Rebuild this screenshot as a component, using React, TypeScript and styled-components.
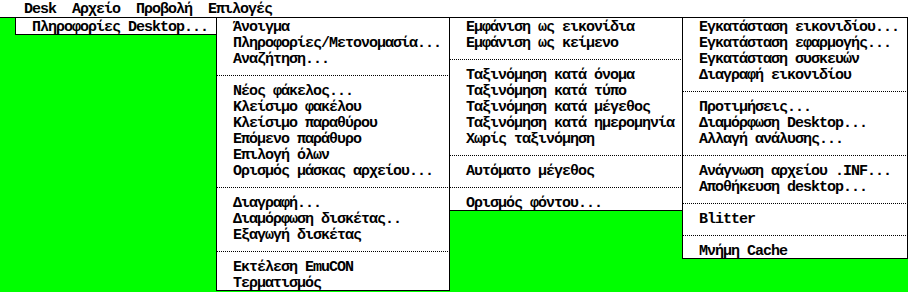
import React from 'react';
import styled, { createGlobalStyle } from 'styled-components';

const Global = createGlobalStyle`
  html, body { margin: 0; padding: 0; background: #00ff00; }
  body { width: 908px; height: 292px; overflow: hidden; }
`;

const Screen = styled.div`
  width: 908px;
  height: 292px;
  overflow: hidden;
  background: #00ff00;
  color: #000;
  font-family: "Liberation Mono", "DejaVu Sans Mono", monospace;
  font-weight: bold;
  font-size: 15px;
  letter-spacing: -1px;
  line-height: 16px;
  white-space: pre;
`;

const MenuBar = styled.div`
  display: flex;
  box-sizing: border-box;
  height: 18px;
  background: #fff;
  border-bottom: 1px solid #000;
  padding-left: 16px;
`;

const Title = styled.div`
  box-sizing: border-box;
  height: 17px;
  padding: 2px 8px 0;
  line-height: 16px;
`;

const Drops = styled.div`
  display: flex;
  align-items: flex-start;
  margin-top: -1px;
  padding-left: 15px;
`;

const Panel = styled.div<{ $cols: number }>`
  width: ${(p) => p.$cols * 8}px;
  background: #fff;
  border: 1px solid #000;
  & + & {
    margin-left: -1px;
  }
`;

const Item = styled.div`
  box-sizing: border-box;
  height: 16px;
  padding: 2px 0 0 16px;
  line-height: 16px;
`;

const Sep = styled.div`
  height: 16px;
  position: relative;
  &::after {
    content: '';
    position: absolute;
    left: 0;
    right: 0;
    top: 9px;
    height: 1px;
    background-image: linear-gradient(to right, #000 50%, transparent 50%);
    background-size: 2px 1px;
  }
`;

type Entry = string | null;

const menus: { cols: number; items: Entry[] }[] = [
  { cols: 25, items: ['Πληροφορίες Desktop...'] },
  {
    cols: 29,
    items: [
      'Άνοιγμα',
      'Πληροφορίες/Μετονομασία...',
      'Αναζήτηση...',
      null,
      'Νέος φάκελος...',
      'Κλείσιμο φακέλου',
      'Κλείσιμο παραθύρου',
      'Επόμενο παράθυρο',
      'Επιλογή όλων',
      'Ορισμός μάσκας αρχείου...',
      null,
      'Διαγραφή...',
      'Διαμόρφωση δισκέτας..',
      'Εξαγωγή δισκέτας',
      null,
      'Εκτέλεση EmuCON',
      'Τερματισμός',
    ],
  },
  {
    cols: 29,
    items: [
      'Εμφάνιση ως εικονίδια',
      'Εμφάνιση ως κείμενο',
      null,
      'Ταξινόμηση κατά όνομα',
      'Ταξινόμηση κατά τύπο',
      'Ταξινόμηση κατά μέγεθος',
      'Ταξινόμηση κατά ημερομηνία',
      'Χωρίς ταξινόμηση',
      null,
      'Αυτόματο μέγεθος',
      null,
      'Ορισμός φόντου...',
    ],
  },
  {
    cols: 28,
    items: [
      'Εγκατάσταση εικονιδίου...',
      'Εγκατάσταση εφαρμογής...',
      'Εγκατάσταση συσκευών',
      'Διαγραφή εικονιδίου',
      null,
      'Προτιμήσεις...',
      'Διαμόρφωση Desktop...',
      'Αλλαγή ανάλυσης...',
      null,
      'Ανάγνωση αρχείου .INF...',
      'Αποθήκευση desktop...',
      null,
      'Blitter',
      null,
      'Μνήμη Cache',
    ],
  },
];

const titles = ['Desk', 'Αρχείο', 'Προβολή', 'Επιλογές'];

export default function App() {
  return (
    <Screen>
      <Global />
      <MenuBar>
        {titles.map((t) => (
          <Title key={t}>{t}</Title>
        ))}
      </MenuBar>
      <Drops>
        {menus.map((m, i) => (
          <Panel key={i} $cols={m.cols}>
            {m.items.map((it, j) => (it === null ? <Sep key={j} /> : <Item key={j}>{it}</Item>))}
          </Panel>
        ))}
      </Drops>
    </Screen>
  );
}
